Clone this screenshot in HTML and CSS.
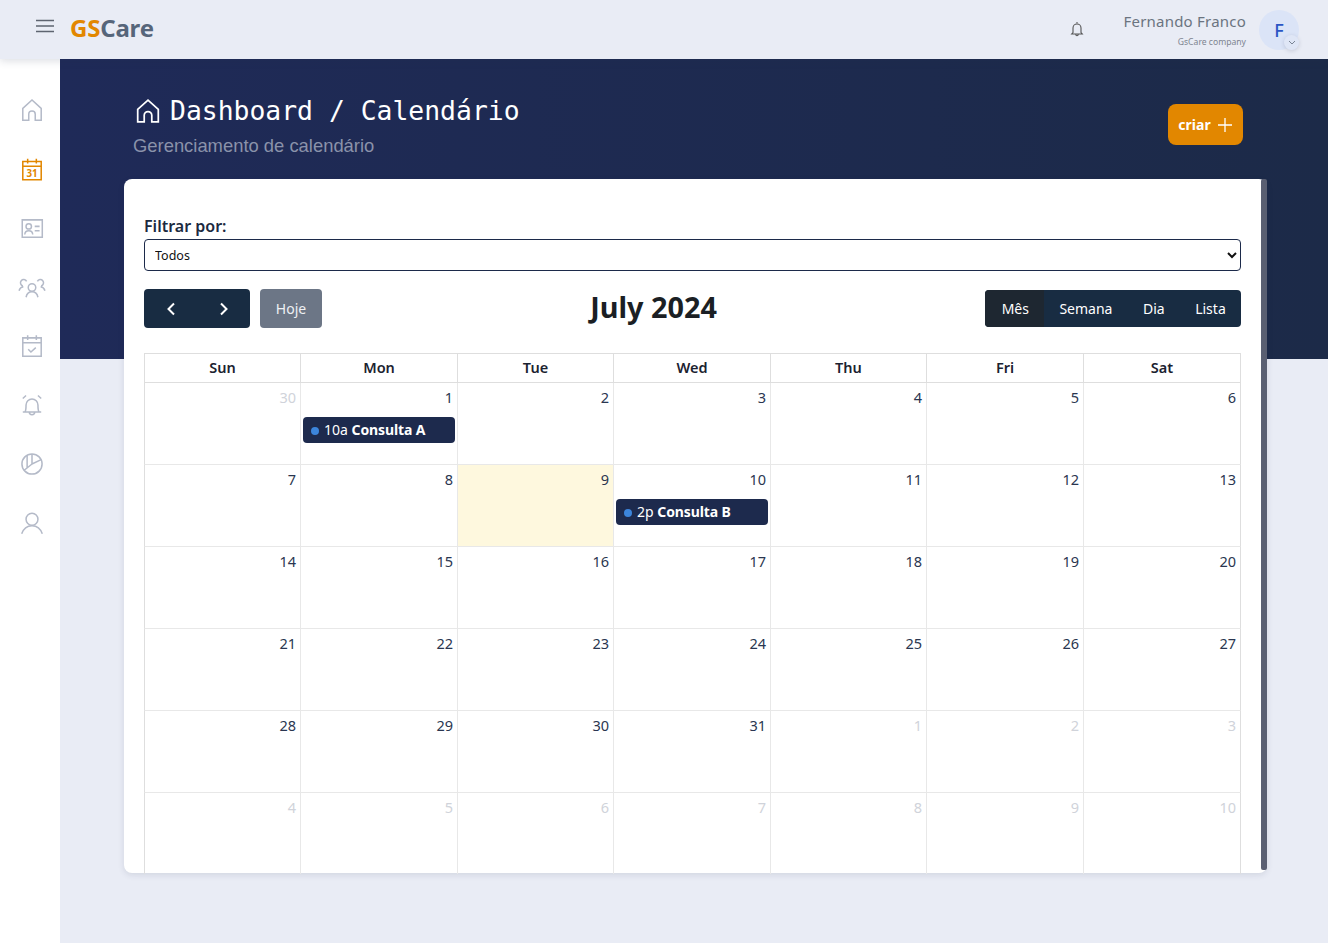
FILE: index.html
```html
<!DOCTYPE html>
<html lang="pt-BR">
<head>
  <meta charset="UTF-8" />
  <title>GSCare - Calendário</title>
  <link rel="stylesheet" href="styles.css">
</head>
<body>
<header class="topbar">
  <div class="brand-side">
    <svg class="burger" width="18" height="14" viewBox="0 0 18 14"><path d="M0 1.5h18M0 7h18M0 12.5h18"/></svg>
    <div class="logo"><span class="logo-gs">GS</span><span class="logo-care">Care</span></div>
  </div>
  <div class="user-side">
    <svg class="bell" width="14" height="16" viewBox="0 0 14 16"><path d="M7 1v1.2M3 11.5V7a4 4 0 0 1 8 0v4.500l1.300 1.500H1.700zM5.800 13.500a1.200 1.200 0 0 0 2.400 0"/></svg>
    <div class="user-text">
      <div class="user-name">Fernando Franco</div>
      <div class="user-company">GsCare company</div>
    </div>
    <div class="avatar">F
      <span class="avatar-caret"><svg width="8" height="5" viewBox="0 0 8 5"><path d="M1 1l3 3 3-3"/></svg></span>
    </div>
  </div>
</header>

<div class="layout">
  <nav class="sidebar">
    <svg class="nav-icon" viewBox="0 0 24 24"><path d="M3.500 21.500V10.500L12 2.800l8.500 7.700v11h-5.500v-5.500a3 3 0 0 0-6 0v5.500z"/></svg>
    <svg class="nav-icon active" viewBox="0 0 24 24"><path d="M3.500 5h17v17h-17zM3.500 9.500h17M8 2.500v4.500M16 2.500v4.500"/><text x="12" y="19.500" class="cal-num">31</text></svg>
    <svg class="nav-icon" viewBox="0 0 24 24"><path d="M3 4.500h18.500v16H3z"/><circle cx="9" cy="10.500" r="2.500"/><path d="M5.300 18c.4-4.500 7-4.500 7.400 0M14.500 10.500h4.500M14.500 14.500h4.500"/></svg>
    <svg class="nav-icon wide" viewBox="0 0 26 24"><circle cx="13" cy="12.500" r="3.500"/><path d="M7.500 21.500c.8-4 3-5 5.500-5s4.700 1 5.500 5M4.500 11a3 3 0 1 1 3.500-4.200M21.500 11A3 3 0 1 0 18 6.800M1 15.500c.6-2.500 2-3.500 4-3.800M25 15.500c-.6-2.500-2-3.500-4-3.800"/></svg>
    <svg class="nav-icon" viewBox="0 0 24 24"><path d="M3.500 4.500h17v17h-17zM3.500 9h17M8 2v4.500M16 2v4.500M8.500 15l2.500 2.500 4.500-4"/></svg>
    <svg class="nav-icon" viewBox="0 0 24 24"><path d="M5.500 18.500c1-1.500 1-3 1-6.500a5.500 5.500 0 0 1 11 0c0 3.500 0 5 1 6.500zM3.500 18.500h17M9.500 18.500a2.500 2.500 0 0 0 5 0M3.500 6l3-2.800M20.500 6l-3-2.800"/></svg>
    <svg class="nav-icon" viewBox="0 0 24 24"><circle cx="12" cy="12" r="9.300"/><path d="M12 2.700V12l8.500-4M12 12l-7.500 6M7.500 3.900V15.500"/></svg>
    <svg class="nav-icon" viewBox="0 0 24 24"><circle cx="12" cy="8.500" r="5.500"/><path d="M2.500 22c1.500-4.500 5-7.500 9.500-7.500s8 3 9.500 7.500"/></svg>
  </nav>

  <main class="content">
    <div class="page-head">
      <div>
        <h1 class="page-title">
          <svg width="26" height="26" viewBox="0 0 24 24"><path d="M2.500 22V10.500L12 2l9.500 8.500V22h-6v-6a3.500 3.500 0 0 0-7 0v6z"/></svg>
          Dashboard / Calendário
        </h1>
        <p class="page-sub">Gerenciamento de calendário</p>
      </div>
      <button class="btn-create">criar
        <svg width="16" height="16" viewBox="0 0 16 16"><path d="M8 1v14M1 8h14"/></svg>
      </button>
    </div>

    <section class="card">
      <span class="card-scroll"></span>
      <label class="filter-label">Filtrar por:</label>
      <select class="filter-select"><option>Todos</option></select>

      <div class="cal-toolbar">
        <div class="toolbar-left">
          <div class="nav-group">
            <button class="nav-btn"><svg width="10" height="14" viewBox="0 0 10 14"><path d="M8 1.500L2.500 7 8 12.500"/></svg></button>
            <button class="nav-btn"><svg width="10" height="14" viewBox="0 0 10 14"><path d="M2 1.500L7.500 7 2 12.500"/></svg></button>
          </div>
          <button class="btn-today">Hoje</button>
        </div>
        <h2 class="cal-title">July 2024</h2>
        <div class="view-group">
          <button class="view-btn current">Mês</button>
          <button class="view-btn">Semana</button>
          <button class="view-btn">Dia</button>
          <button class="view-btn">Lista</button>
        </div>
      </div>

      <table class="calendar">
        <thead>
          <tr><th>Sun</th><th>Mon</th><th>Tue</th><th>Wed</th><th>Thu</th><th>Fri</th><th>Sat</th></tr>
        </thead>
        <tbody>
          <tr>
            <td class="other"><div class="day">30</div></td>
            <td><div class="day">1</div><div class="event"><i></i>10a <b>Consulta A</b></div></td>
            <td><div class="day">2</div></td>
            <td><div class="day">3</div></td>
            <td><div class="day">4</div></td>
            <td><div class="day">5</div></td>
            <td><div class="day">6</div></td>
          </tr>
          <tr>
            <td><div class="day">7</div></td>
            <td><div class="day">8</div></td>
            <td class="today"><div class="day">9</div></td>
            <td><div class="day">10</div><div class="event"><i></i>2p <b>Consulta B</b></div></td>
            <td><div class="day">11</div></td>
            <td><div class="day">12</div></td>
            <td><div class="day">13</div></td>
          </tr>
          <tr>
            <td><div class="day">14</div></td>
            <td><div class="day">15</div></td>
            <td><div class="day">16</div></td>
            <td><div class="day">17</div></td>
            <td><div class="day">18</div></td>
            <td><div class="day">19</div></td>
            <td><div class="day">20</div></td>
          </tr>
          <tr>
            <td><div class="day">21</div></td>
            <td><div class="day">22</div></td>
            <td><div class="day">23</div></td>
            <td><div class="day">24</div></td>
            <td><div class="day">25</div></td>
            <td><div class="day">26</div></td>
            <td><div class="day">27</div></td>
          </tr>
          <tr>
            <td><div class="day">28</div></td>
            <td><div class="day">29</div></td>
            <td><div class="day">30</div></td>
            <td><div class="day">31</div></td>
            <td class="other"><div class="day">1</div></td>
            <td class="other"><div class="day">2</div></td>
            <td class="other"><div class="day">3</div></td>
          </tr>
          <tr>
            <td class="other"><div class="day">4</div></td>
            <td class="other"><div class="day">5</div></td>
            <td class="other"><div class="day">6</div></td>
            <td class="other"><div class="day">7</div></td>
            <td class="other"><div class="day">8</div></td>
            <td class="other"><div class="day">9</div></td>
            <td class="other"><div class="day">10</div></td>
          </tr>
        </tbody>
      </table>
    </section>
  </main>
</div>
</body>
</html>
```

FILE: styles.css
```css
* {
  box-sizing: border-box;
}
html, body {
  margin: 0;
  height: 943px;
  overflow: hidden;
}
body {
  background: #e9ecf5;
  font-family: "Noto Sans", sans-serif;
  color: #1c2a4a;
}
svg {
  fill: none;
  display: block;
}

/* top bar */
.topbar {
  height: 59px;
  background: #e9ecf5;
  display: flex;
  align-items: center;
  justify-content: space-between;
  padding: 0 29px 0 36px;
  position: relative;
  z-index: 2;
  box-shadow: 0 2px 8px rgba(40, 50, 80, 0.16);
}
.brand-side {
  display: flex;
  align-items: center;
  gap: 16px;
  padding-bottom: 4px;
}
.burger {
  stroke: #5e6470;
  stroke-width: 1.5;
  margin-top: -4px;
}
.logo {
  font-size: 24px;
  font-weight: 700;
  line-height: 30px;
  letter-spacing: -0.2px;
}
.logo-gs {
  color: #e28700;
}
.logo-care {
  color: #56657a;
}
.user-side {
  display: flex;
  align-items: center;
}
.bell {
  stroke: #555;
  stroke-width: 1.1;
  margin-right: 39px;
  margin-top: -2px;
}
.user-text {
  text-align: right;
  margin-right: 13px;
  margin-bottom: 1px;
}
.user-name {
  font-size: 15px;
  line-height: 20px;
  letter-spacing: 0.22px;
  color: #6b7480;
}
.user-company {
  font-size: 8.600px;
  line-height: 12px;
  margin-top: 5px;
  color: #7d8490;
}
.avatar {
  width: 40px;
  height: 40px;
  border-radius: 50%;
  background: #dbe4f7;
  color: #2a55c4;
  font-size: 18px;
  font-weight: 500;
  display: flex;
  align-items: center;
  justify-content: center;
  position: relative;
}
.avatar-caret {
  position: absolute;
  right: 0;
  bottom: 0;
  width: 15px;
  height: 15px;
  border-radius: 50%;
  background: #dfe6f6;
  box-shadow: 0 1px 4px rgba(60, 70, 100, 0.2);
  display: flex;
  align-items: center;
  justify-content: center;
}
.avatar-caret svg {
  stroke: #7a8494;
  stroke-width: 1;
}

/* sidebar */
.layout {
  display: flex;
  height: 884px;
}
.sidebar {
  width: 60px;
  flex: none;
  background: #fff;
  display: flex;
  flex-direction: column;
  align-items: center;
  gap: 33px;
  padding: 38px 8px 0 12px;
}
.nav-icon {
  width: 26px;
  height: 26px;
  stroke: #b4bac8;
  stroke-width: 1.4;
}
.nav-icon.wide {
  width: 28px;
}
.nav-icon.active {
  stroke: #e28700;
}
.cal-num {
  font-family: "Noto Sans", sans-serif;
  font-size: 9px;
  font-weight: 700;
  fill: #e28700;
  stroke: none;
  text-anchor: middle;
}

/* main */
.content {
  flex: 1;
  background: linear-gradient(to right, #1f2a58, #1c2a48) no-repeat;
  background-size: 100% 300px;
  padding: 0 61px 0 64px;
}
.page-head {
  height: 120px;
  display: flex;
  justify-content: space-between;
  padding: 34px 24px 0 11px;
}
.page-title {
  margin: 0;
  color: #fff;
  font-family: "DejaVu Sans Mono", monospace;
  font-size: 26.400px;
  font-weight: 400;
  line-height: 36px;
  display: flex;
  align-items: center;
  gap: 9px;
  white-space: nowrap;
}
.page-title svg {
  stroke: #fff;
  stroke-width: 1.6;
}
.page-sub {
  margin: 6px 0 0 -2px;
  font-family: "Liberation Sans", sans-serif;
  font-size: 18.400px;
  line-height: 22px;
  color: #8a92aa;
}
.btn-create {
  margin-top: 11px;
  width: 75px;
  height: 41px;
  background: #e28700;
  color: #fff;
  border: none;
  border-radius: 8px;
  font-family: "Noto Sans", sans-serif;
  font-size: 14px;
  font-weight: 700;
  display: flex;
  align-items: center;
  justify-content: center;
  gap: 6px;
  padding: 0;
}
.btn-create svg {
  stroke: #fff;
  stroke-width: 1.3;
}

/* card */
.card {
  position: relative;
  background: #fff;
  border-radius: 8px;
  height: 694px;
  padding: 37px 26px 0 20px;
  box-shadow: 0 2px 6px rgba(40, 50, 80, 0.12);
}
.card-scroll {
  position: absolute;
  top: 0;
  right: 0;
  bottom: 3px;
  width: 6px;
  background: #5a5f72;
  border-radius: 2px;
}
.filter-label {
  display: block;
  font-size: 16px;
  font-weight: 600;
  line-height: 20px;
  color: #1c2a40;
}
.filter-select {
  display: block;
  width: 100%;
  height: 32px;
  margin-top: 3px;
  padding: 0 0 0 6px;
  background: #fff;
  border: 1px solid #1c2a4a;
  border-radius: 4px;
  font-family: "Noto Sans", sans-serif;
  font-size: 12.500px;
  color: #111;
}
.cal-toolbar {
  display: flex;
  justify-content: space-between;
  align-items: center;
  margin-top: 18px;
  margin-bottom: 25px;
  height: 39px;
}
.toolbar-left {
  display: flex;
  gap: 10px;
}
.nav-group {
  display: flex;
  width: 106px;
  height: 39px;
  background: #182c42;
  border-radius: 4px;
}
.nav-btn {
  flex: 1;
  background: none;
  border: none;
  padding: 0;
  display: flex;
  align-items: center;
  justify-content: center;
}
.nav-btn svg {
  stroke: #fff;
  stroke-width: 2;
}
.btn-today {
  width: 62px;
  height: 39px;
  background: #6c7686;
  color: #eef0f3;
  border: none;
  border-radius: 4px;
  font-family: "Noto Sans", sans-serif;
  font-size: 14px;
  padding: 0;
}
.cal-title {
  margin: 0 0 3px 0;
  font-size: 28.800px;
  font-weight: 700;
  line-height: 36px;
  color: #1b1f24;
}
.view-group {
  display: flex;
  height: 37px;
  background: #182c42;
  border-radius: 4px;
  overflow: hidden;
}
.view-btn {
  background: none;
  border: none;
  color: #fff;
  font-family: "Noto Sans", sans-serif;
  font-size: 14px;
  padding: 0 15.250px;
}
.view-btn.current {
  background: #1e2731;
  padding: 0 15.250px 0 16.500px;
}

/* calendar */
.calendar {
  width: 100%;
  table-layout: fixed;
  border-collapse: separate;
  border-spacing: 0;
}
.calendar th {
  width: 157px;
  height: 30px;
  padding: 0 0 2px 0;
  border-top: 1px solid #dedede;
  border-bottom: 1px solid #dedede;
  border-right: 1px solid #dedede;
  font-size: 14.500px;
  font-weight: 600;
  color: #1b2230;
}
.calendar th:nth-child(3), .calendar th:nth-child(5) {
  width: 156px;
}
.calendar th:first-child {
  border-left: 1px solid #dedede;
}
.calendar td {
  height: 82px;
  padding: 0;
  border-bottom: 1px solid #e8e8e8;
  border-right: 1px solid #e8e8e8;
  vertical-align: top;
}
.calendar td:first-child {
  border-left: 1px solid #dedede;
}
.calendar td:last-child {
  border-right-color: #dedede;
}
.calendar tbody tr:last-child td {
  height: 81px;
  border-bottom: none;
}
.day {
  text-align: right;
  font-size: 14.500px;
  line-height: 20px;
  padding: 4px 4px 0 0;
  color: #2a3650;
}
.other .day {
  color: #d0d3da;
}
.today {
  background: #fef8de;
}
.event {
  height: 26px;
  margin: 10px 2px 0 2px;
  padding-left: 8px;
  background: #1d2a4d;
  border-radius: 4px;
  color: #fff;
  font-size: 14px;
  line-height: 26px;
  white-space: nowrap;
}
.event i {
  display: inline-block;
  width: 8px;
  height: 8px;
  margin-right: 5px;
  border-radius: 50%;
  background: #3c85db;
}
.event b {
  font-weight: 700;
  letter-spacing: -0.1px;
}
```
